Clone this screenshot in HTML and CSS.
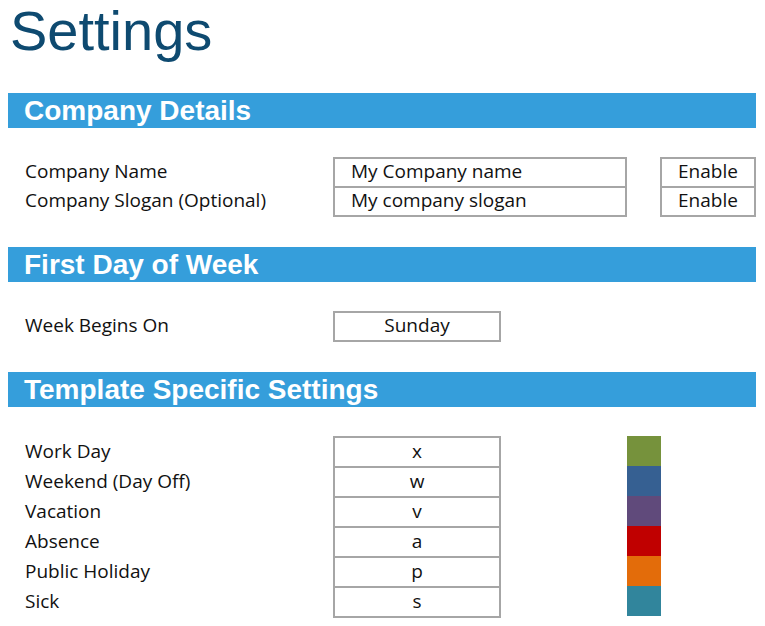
FILE: index.html
```html
<!DOCTYPE html>
<html lang="en">
<head>
  <meta charset="UTF-8">
  <meta name="viewport" content="width=device-width, initial-scale=1.0">
  <title>Settings</title>
  <link rel="stylesheet" href="styles.css">
</head>
<body>
  <div class="settings-page">
    <h1 class="page-title">Settings</h1>

    <div class="section">
      <h2 class="section-bar">Company Details</h2>
      <div class="section-body company">
        <div class="labels">
          <div class="cell">Company Name</div>
          <div class="cell">Company Slogan (Optional)</div>
        </div>
        <div class="box text-box">
          <div class="cell">My Company name</div>
          <div class="cell">My company slogan</div>
        </div>
        <div class="box toggle-box">
          <div class="cell">Enable</div>
          <div class="cell">Enable</div>
        </div>
      </div>
    </div>

    <div class="section">
      <h2 class="section-bar">First Day of Week</h2>
      <div class="section-body week">
        <div class="labels">
          <div class="cell">Week Begins On</div>
        </div>
        <div class="box code-box">
          <div class="cell">Sunday</div>
        </div>
      </div>
    </div>

    <div class="section">
      <h2 class="section-bar">Template Specific Settings</h2>
      <div class="section-body template">
        <div class="labels">
          <div class="cell">Work Day</div>
          <div class="cell">Weekend (Day Off)</div>
          <div class="cell">Vacation</div>
          <div class="cell">Absence</div>
          <div class="cell">Public Holiday</div>
          <div class="cell">Sick</div>
        </div>
        <div class="box code-box">
          <div class="cell">x</div>
          <div class="cell">w</div>
          <div class="cell">v</div>
          <div class="cell">a</div>
          <div class="cell">p</div>
          <div class="cell">s</div>
        </div>
        <div class="swatches">
          <div class="swatch work"></div>
          <div class="swatch weekend"></div>
          <div class="swatch vacation"></div>
          <div class="swatch absence"></div>
          <div class="swatch holiday"></div>
          <div class="swatch sick"></div>
        </div>
      </div>
    </div>
  </div>
</body>
</html>
```

FILE: styles.css
```css
body {
  margin: 0;
  background-color: #ffffff;
  font-family: "Open Sans", "Liberation Sans", sans-serif;
  color: #111111;
}

.settings-page {
  width: 748px;
  margin-left: 8px;
}

.page-title {
  margin: 3px 0 35px 2px;
  font-family: "Liberation Sans", Arial, sans-serif;
  font-weight: normal;
  font-size: 56px;
  line-height: 55px;
  color: #0e4a70;
}

.section-bar {
  margin: 0;
  height: 35px;
  padding-left: 16px;
  background-color: #359edb;
  color: #ffffff;
  font-family: "Liberation Sans", Arial, sans-serif;
  font-weight: bold;
  font-size: 28px;
  line-height: 35px;
}

.section-body {
  display: flex;
  align-items: flex-start;
  padding: 29px 0 30px 17px;
}

.labels {
  width: 308px;
}

/* one row of a settings table: 2px rule on top, text centred in the rest */
.cell {
  height: 27px;
  border-top: 2px solid transparent;
  font-size: 19px;
  line-height: 25px;
  white-space: nowrap;
}

.template .cell {
  height: 28px;
  line-height: 26px;
}

.box {
  border: 2px solid #a6a6a6;
  border-top: none;
}

.box .cell {
  border-top-color: #a6a6a6;
  text-align: center;
}

.text-box {
  width: 290px;
}

.text-box .cell {
  text-align: left;
  padding-left: 16px;
}

.toggle-box {
  width: 92px;
  margin-left: 33px;
}

.code-box {
  width: 164px;
}

.swatches {
  margin-left: 126px;
  width: 34px;
}

.swatch {
  height: 30px;
}

.swatch.work { background-color: #76923c; }
.swatch.weekend { background-color: #366092; }
.swatch.vacation { background-color: #604a7b; }
.swatch.absence { background-color: #c00000; }
.swatch.holiday { background-color: #e36c0a; }
.swatch.sick { background-color: #31859c; }
```
